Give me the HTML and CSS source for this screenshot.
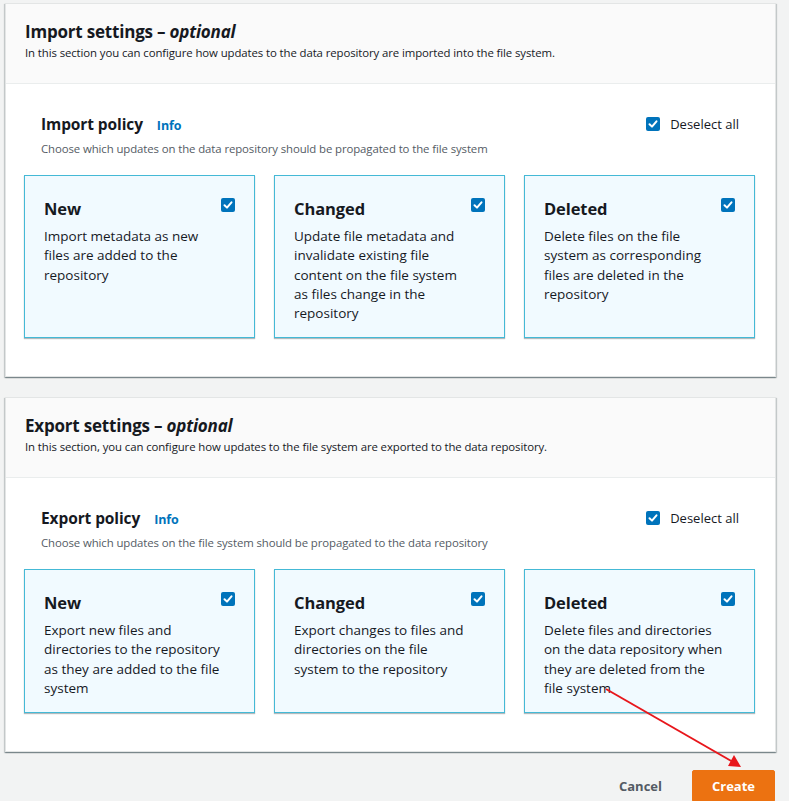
FILE: index.html
```html
<!DOCTYPE html>
<html>
<head>
<meta charset="utf-8">
<link rel="stylesheet" href="styles.css">
</head>
<body>
<div class="page">
  <section class="panel">
    <header class="panel-head">
      <h2 class="panel-title">Import settings – <em>optional</em></h2>
      <p class="panel-desc">In this section you can configure how updates to the data repository are imported into the file system.</p>
    </header>
    <div class="panel-body">
      <div class="policy-head">
        <div>
          <h3 class="policy-title">Import policy <a class="info">Info</a></h3>
          <p class="policy-desc">Choose which updates on the data repository should be propagated to the file system</p>
        </div>
        <label class="deselect"><span class="cb"><svg viewBox="0 0 14 14"><path d="M3.5 7.2 L6 9.6 L10.5 4.3" /></svg></span>Deselect all</label>
      </div>
      <div class="tiles tall">
        <div class="tile">
          <div class="tile-top"><span class="tile-title">New</span><span class="cb"><svg viewBox="0 0 14 14"><path d="M3.5 7.2 L6 9.6 L10.5 4.3" /></svg></span></div>
          <p class="tile-text">Import metadata as new files are added to the repository</p>
        </div>
        <div class="tile">
          <div class="tile-top"><span class="tile-title">Changed</span><span class="cb"><svg viewBox="0 0 14 14"><path d="M3.5 7.2 L6 9.6 L10.5 4.3" /></svg></span></div>
          <p class="tile-text">Update file metadata and invalidate existing file content on the file system as files change in the repository</p>
        </div>
        <div class="tile">
          <div class="tile-top"><span class="tile-title">Deleted</span><span class="cb"><svg viewBox="0 0 14 14"><path d="M3.5 7.2 L6 9.6 L10.5 4.3" /></svg></span></div>
          <p class="tile-text">Delete files on the file system as corresponding files are deleted in the repository</p>
        </div>
      </div>
    </div>
  </section>

  <section class="panel">
    <header class="panel-head">
      <h2 class="panel-title">Export settings – <em>optional</em></h2>
      <p class="panel-desc">In this section, you can configure how updates to the file system are exported to the data repository.</p>
    </header>
    <div class="panel-body">
      <div class="policy-head">
        <div>
          <h3 class="policy-title">Export policy <a class="info">Info</a></h3>
          <p class="policy-desc">Choose which updates on the file system should be propagated to the data repository</p>
        </div>
        <label class="deselect"><span class="cb"><svg viewBox="0 0 14 14"><path d="M3.5 7.2 L6 9.6 L10.5 4.3" /></svg></span>Deselect all</label>
      </div>
      <div class="tiles">
        <div class="tile">
          <div class="tile-top"><span class="tile-title">New</span><span class="cb"><svg viewBox="0 0 14 14"><path d="M3.5 7.2 L6 9.6 L10.5 4.3" /></svg></span></div>
          <p class="tile-text">Export new files and directories to the repository as they are added to the file system</p>
        </div>
        <div class="tile">
          <div class="tile-top"><span class="tile-title">Changed</span><span class="cb"><svg viewBox="0 0 14 14"><path d="M3.5 7.2 L6 9.6 L10.5 4.3" /></svg></span></div>
          <p class="tile-text">Export changes to files and directories on the file system to the repository</p>
        </div>
        <div class="tile">
          <div class="tile-top"><span class="tile-title">Deleted</span><span class="cb"><svg viewBox="0 0 14 14"><path d="M3.5 7.2 L6 9.6 L10.5 4.3" /></svg></span></div>
          <p class="tile-text wide">Delete files and directories on the data repository when they are deleted from the file system</p>
        </div>
      </div>
    </div>
  </section>

  <div class="actions">
    <button class="btn-link">Cancel</button>
    <button class="btn-primary">Create</button>
  </div>
</div>
<svg class="arrow" width="789" height="801" viewBox="0 0 789 801">
  <line x1="606" y1="689" x2="733" y2="762" stroke="#e8161b" stroke-width="2"/>
  <polygon points="741,767 728,766 734,755" fill="#e8161b"/>
</svg>
</body>
</html>
```

FILE: styles.css
```css
* { box-sizing: border-box; }
html, body { margin: 0; padding: 0; }
body {
  background: #f2f3f3;
  font-family: "Open Sans", "Noto Sans", sans-serif;
  color: #16191f;
  width: 789px;
  height: 801px;
  overflow: hidden;
  position: relative;
}
.page {
  padding: 3px 13px 0 5px;
  display: flex;
  flex-direction: column;
  gap: 20px;
}
.panel {
  background: #fff;
  border: 1px solid #e3e5e5;
  box-shadow: 0 1px 1px 0 rgba(0,28,36,.3), 1px 1px 1px 0 rgba(0,28,36,.15), -1px 1px 1px 0 rgba(0,28,36,.15);
}
.panel-head {
  background: #fafafa;
  border-bottom: 1px solid #eaeded;
  height: 80px;
  padding: 16px 19px 0;
}
.panel-title {
  margin: 0;
  font-size: 17px;
  line-height: 24px;
  font-weight: 700;
  letter-spacing: -0.2px;
}
.panel-title em { font-style: italic; }
.panel-desc {
  margin: 1px 0 0;
  font-size: 11.4px;
  line-height: 16px;
  color: #16191f;
  letter-spacing: -0.1px;
}
.panel-body {
  padding: 29px 20px 38px 18px;
}
.policy-head {
  display: flex;
  justify-content: space-between;
  align-items: flex-start;
  padding: 0 16px 0 17px;
}
.policy-title {
  margin: 0;
  font-size: 15.5px;
  line-height: 22px;
  font-weight: 700;
  letter-spacing: -0.1px;
}
.info {
  color: #0073bb;
  font-size: 12.5px;
  font-weight: 700;
  margin-left: 10px;
}
.policy-desc {
  margin: 4px 0 0;
  font-size: 11.4px;
  line-height: 16px;
  color: #545b64;
  letter-spacing: -0.1px;
}
.deselect {
  display: flex;
  align-items: center;
  gap: 10px;
  font-size: 13px;
  margin-top: 2px;
}
.cb {
  width: 14px;
  height: 14px;
  border-radius: 2px;
  background: #0073bb;
  display: inline-flex;
  flex: none;
}
.cb svg { width: 14px; height: 14px; }
.cb path { fill: none; stroke: #fff; stroke-width: 2; stroke-linecap: round; stroke-linejoin: round; }
.tiles {
  display: grid;
  grid-template-columns: repeat(3, 231px);
  justify-content: space-between;
  margin-top: 18px;
}
.tile {
  background: #f1faff;
  border: 1px solid #44b9d6;
  box-shadow: 0 1px 1px 0 rgba(0,28,36,.3);
  padding: 21px 19px 18px 19px;
  height: 144px;
}
.tiles.tall .tile { height: 163px; }
.tile-top {
  display: flex;
  justify-content: space-between;
  align-items: flex-start;
}
.tile-title {
  font-size: 16.5px;
  font-weight: 700;
  line-height: 24px;
  letter-spacing: -0.1px;
}
.tile-top .cb { margin-top: 1px; }
.tile-text {
  margin: 6px 0 0;
  max-width: 178px;
  font-size: 13.5px;
  line-height: 19.3px;
  color: #16191f;
}
.tile-text.wide { max-width: 181px; }
.actions {
  display: flex;
  justify-content: flex-end;
  align-items: center;
  gap: 12px;
  margin-top: -2px;
  padding-right: 1px;
}
.btn-link {
  background: none;
  border: none;
  font-family: inherit;
  font-weight: 700;
  font-size: 13px;
  color: #545b64;
  padding: 6px 18px;
}
.btn-primary {
  background: #ec7211;
  border: 1px solid #ec7211;
  color: #fff;
  font-family: inherit;
  font-weight: 700;
  font-size: 13px;
  width: 83px;
  height: 32px;
  border-radius: 2px;
  padding: 0;
}
.arrow {
  position: absolute;
  left: 0;
  top: 0;
  pointer-events: none;
}
```
